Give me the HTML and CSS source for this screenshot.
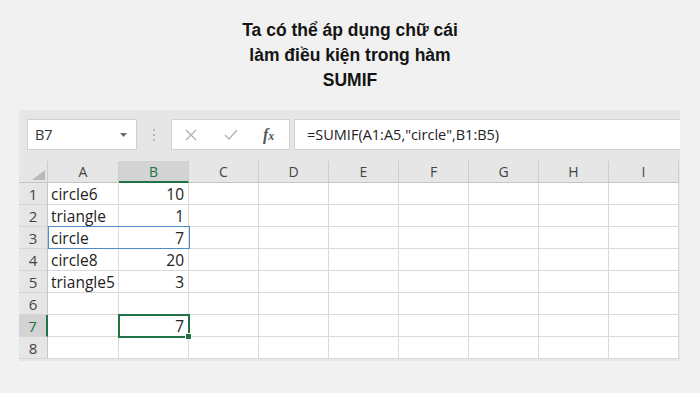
FILE: index.html
```html
<!DOCTYPE html>
<html lang="vi">
<head>
<meta charset="utf-8">
<link rel="stylesheet" href="styles.css">
</head>
<body>
<h1 class="title">Ta có thể áp dụng chữ cái<br>làm điều kiện trong hàm<br>SUMIF</h1>
<div class="excel">
  <div class="toolbar">
    <div class="namebox"><span>B7</span><svg class="arrow" width="7" height="4" viewBox="0 0 7 4"><path d="M0 0h7L3.5 4z" fill="#6a6a6a"/></svg></div>
    <svg class="dots" width="2" height="12" viewBox="0 0 2 12"><rect x="0" y="0" width="2" height="2" fill="#b5b5b5"/><rect x="0" y="5" width="2" height="2" fill="#b5b5b5"/><rect x="0" y="10" width="2" height="2" fill="#b5b5b5"/></svg>
    <div class="fxbox">
      <svg class="ic-x" width="12" height="12" viewBox="0 0 12 12"><path d="M1 1L11 11M11 1L1 11" stroke="#b3b3b3" stroke-width="1.4" fill="none"/></svg>
      <svg class="ic-check" width="14" height="11" viewBox="0 0 14 11"><path d="M1 6L5 10L13 1" stroke="#b3b3b3" stroke-width="1.4" fill="none"/></svg>
      <span class="fx">f<span class="fx-sub">x</span></span>
    </div>
    <div class="formula">=SUMIF(A1:A5,"circle",B1:B5)</div>
  </div>
  <div class="sheet">
    <div class="hd corner"><svg width="13" height="10" viewBox="0 0 13 10"><path d="M13 0V10H0z" fill="#b8b8b8"/></svg></div>
    <div class="hd">A</div><div class="hd active">B</div><div class="hd">C</div><div class="hd">D</div><div class="hd">E</div><div class="hd">F</div><div class="hd">G</div><div class="hd">H</div><div class="hd">I</div>

    <div class="rh">1</div><div class="c">circle6</div><div class="c n">10</div><div class="c"></div><div class="c"></div><div class="c"></div><div class="c"></div><div class="c"></div><div class="c"></div><div class="c"></div>
    <div class="rh">2</div><div class="c">triangle</div><div class="c n">1</div><div class="c"></div><div class="c"></div><div class="c"></div><div class="c"></div><div class="c"></div><div class="c"></div><div class="c"></div>
    <div class="rh">3</div><div class="c">circle</div><div class="c n">7</div><div class="c"></div><div class="c"></div><div class="c"></div><div class="c"></div><div class="c"></div><div class="c"></div><div class="c"></div>
    <div class="rh">4</div><div class="c">circle8</div><div class="c n">20</div><div class="c"></div><div class="c"></div><div class="c"></div><div class="c"></div><div class="c"></div><div class="c"></div><div class="c"></div>
    <div class="rh">5</div><div class="c">triangle5</div><div class="c n">3</div><div class="c"></div><div class="c"></div><div class="c"></div><div class="c"></div><div class="c"></div><div class="c"></div><div class="c"></div>
    <div class="rh">6</div><div class="c"></div><div class="c n"></div><div class="c"></div><div class="c"></div><div class="c"></div><div class="c"></div><div class="c"></div><div class="c"></div><div class="c"></div>
    <div class="rh active">7</div><div class="c"></div><div class="c n">7</div><div class="c"></div><div class="c"></div><div class="c"></div><div class="c"></div><div class="c"></div><div class="c"></div><div class="c"></div>
    <div class="rh">8</div><div class="c"></div><div class="c n"></div><div class="c"></div><div class="c"></div><div class="c"></div><div class="c"></div><div class="c"></div><div class="c"></div><div class="c"></div>

    <div class="sel-range"></div>
    <div class="sel-cell"><span class="handle"></span></div>
  </div>
</div>
</body>
</html>
```

FILE: styles.css
```css
html, body {
  margin: 0;
  padding: 0;
}
body {
  width: 700px;
  height: 393px;
  background: #f1f1f1;
  font-family: "Liberation Sans", Arial, sans-serif;
  overflow: hidden;
}
.title {
  margin: 18px 0 0;
  text-align: center;
  font-family: "Liberation Sans", Arial, sans-serif;
  font-weight: 700;
  font-size: 17.5px;
  line-height: 25px;
  color: #141414;
}
.excel {
  margin: 17px 0 0 19px;
  width: 661px;
  background: #e6e6e6;
  padding-bottom: 2px;
}
.toolbar {
  display: flex;
  align-items: center;
  height: 51px;
  padding: 9px 0 11px 8px;
  box-sizing: border-box;
}
.namebox {
  width: 110px;
  height: 31px;
  box-sizing: border-box;
  background: #fff;
  border: 1px solid #cfcfcf;
  display: flex;
  align-items: center;
  justify-content: space-between;
  padding: 0 9px 0 7px;
  font-family: "Open Sans", sans-serif;
  font-size: 14.5px;
  color: #333;
}
.dots {
  margin-left: 16px;
}
.fxbox {
  margin-left: 16px;
  width: 119px;
  height: 31px;
  box-sizing: border-box;
  background: #fff;
  border: 1px solid #d2d2d2;
  display: flex;
  align-items: center;
  padding-left: 13px;
}
.ic-check {
  margin-left: 27px;
}
.fx {
  margin-left: 25px;
  font-family: "Liberation Serif", serif;
  font-style: italic;
  font-weight: 700;
  font-size: 16px;
  color: #555;
}
.fx-sub {
  font-size: 12px;
}
.formula {
  margin-left: 4px;
  flex: 1;
  height: 31px;
  box-sizing: border-box;
  background: #fff;
  border: 1px solid #d2d2d2;
  border-right: none;
  display: flex;
  align-items: center;
  padding-left: 12px;
  font-family: "Open Sans", sans-serif;
  font-size: 14.5px;
  color: #222;
}
.sheet {
  position: relative;
  display: grid;
  grid-template-columns: 29px 71px repeat(8, 70px);
  grid-auto-rows: 22px;
  font-family: "Open Sans", sans-serif;
}
.hd {
  background: #e6e6e6;
  border-right: 1px solid #cdcdcd;
  border-bottom: 1px solid #c6c6c6;
  box-sizing: border-box;
  display: flex;
  align-items: center;
  justify-content: center;
  font-size: 14px;
  color: #444;
}
.hd.active {
  background: #d3d3d3;
  color: #217346;
  border-bottom: 2px solid #217346;
}
.corner {
  justify-content: flex-end;
  align-items: flex-end;
  padding: 0 2px 2px 0;
}
.corner svg {
  display: block;
}
.rh {
  background: #e6e6e6;
  border-right: 1px solid #c6c6c6;
  border-bottom: 1px solid #d6d6d6;
  box-sizing: border-box;
  display: flex;
  align-items: center;
  justify-content: center;
  font-size: 15px;
  color: #444;
}
.rh.active {
  background: #d3d3d3;
  color: #217346;
  border-right: 2px solid #217346;
}
.c {
  background: #fff;
  border-right: 1px solid #dadada;
  border-bottom: 1px solid #dadada;
  box-sizing: border-box;
  display: flex;
  align-items: center;
  padding: 1px 4px 0 3px;
  font-size: 15.5px;
  color: #222;
  white-space: nowrap;
}
.c.n {
  justify-content: flex-end;
}
.sel-range {
  position: absolute;
  left: 29px;
  top: 65px;
  width: 142px;
  height: 23px;
  box-sizing: border-box;
  border: 1.5px solid #4f8ccb;
}
.sel-cell {
  position: absolute;
  left: 99px;
  top: 153px;
  width: 72px;
  height: 24px;
  box-sizing: border-box;
  border: 2px solid #217346;
}
.handle {
  position: absolute;
  right: -4px;
  bottom: -4px;
  width: 5px;
  height: 5px;
  background: #217346;
  border: 1px solid #fff;
}
```
